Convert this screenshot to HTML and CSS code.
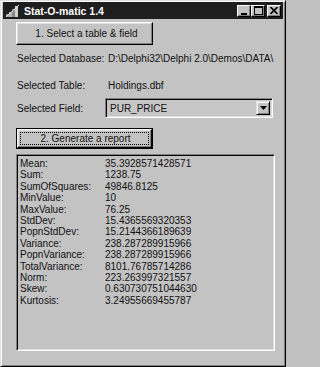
FILE: index.html
```html
<!DOCTYPE html>
<html>
<head>
<meta charset="utf-8">
<link rel="stylesheet" href="styles.css">
</head>
<body>
<div class="window">
  <div class="titlebar">
    <svg class="appicon" width="16" height="14" viewBox="0 0 16 14">
      <rect x="1" y="10" width="3" height="3" fill="#9a9a9a"/>
      <rect x="4" y="8" width="3" height="5" fill="#b8b8b8"/>
      <rect x="7" y="5" width="3" height="8" fill="#8a8a8a"/>
      <rect x="10" y="2" width="3" height="11" fill="#d0d0d0"/>
      <path d="M1 13 L14 1" stroke="#e8e8e8" stroke-width="1"/>
    </svg>
    <span class="title">Stat-O-matic 1.4</span>
    <div class="tbtns">
      <div class="tbtn"><svg width="8" height="8" viewBox="0 0 8 8"><rect x="1" y="6" width="6" height="2" fill="#000"/></svg></div>
      <div class="tbtn"><svg width="9" height="9" viewBox="0 0 9 9"><rect x="0.5" y="0.5" width="8" height="8" fill="none" stroke="#000"/><rect x="0" y="0" width="9" height="2" fill="#000"/></svg></div>
      <div class="tbtn close"><svg width="8" height="7" viewBox="0 0 8 7"><path d="M0.5 0 L7.5 7 M7.5 0 L0.5 7" stroke="#000" stroke-width="1.6"/></svg></div>
    </div>
  </div>
  <div class="content">
    <div class="btn btn1">1. Select a table &amp; field</div>
    <div class="row row-db"><span class="lbl">Selected Database:</span><span class="val">D:\Delphi32\Delphi 2.0\Demos\DATA\</span></div>
    <div class="row row-tbl"><span class="lbl">Selected Table:</span><span class="val">Holdings.dbf</span></div>
    <div class="row row-fld"><span class="lbl">Selected Field:</span>
      <div class="combo"><span class="ctext">PUR_PRICE</span><div class="cbtn"><svg width="7" height="4" viewBox="0 0 7 4"><path d="M0 0 H7 L3.5 4 Z" fill="#000"/></svg></div></div>
    </div>
    <div class="btn2-wrap"><div class="btn btn2"><span class="focus">2. Generate a report</span></div></div>
    <div class="memo">
      <span>Mean:</span><span>35.3928571428571</span>
      <span>Sum:</span><span>1238.75</span>
      <span>SumOfSquares:</span><span>49846.8125</span>
      <span>MinValue:</span><span>10</span>
      <span>MaxValue:</span><span>76.25</span>
      <span>StdDev:</span><span>15.4365569320353</span>
      <span>PopnStdDev:</span><span>15.2144366189639</span>
      <span>Variance:</span><span>238.287289915966</span>
      <span>PopnVariance:</span><span>238.287289915966</span>
      <span>TotalVariance:</span><span>8101.76785714286</span>
      <span>Norm:</span><span>223.263997321557</span>
      <span>Skew:</span><span>0.630730751044630</span>
      <span>Kurtosis:</span><span>3.24955669455787</span>
    </div>
  </div>
</div>
</body>
</html>
```

FILE: styles.css
```css
html, body {
  margin: 0;
  padding: 0;
  background: #c0c0c0;
}
.window {
  width: 286px;
  height: 367px;
  box-sizing: border-box;
  background: #c3c3c3;
  border: 1px solid;
  border-color: #dfdfdf #000 #000 #dfdfdf;
  box-shadow: inset 1px 1px #fff, inset -1px -1px #808080;
  padding: 1px 2px;
  font-family: "Liberation Sans", Arial, sans-serif;
  font-size: 10px;
  color: #111;
  overflow: hidden;
}
.titlebar {
  height: 17px;
  background: #1e1e1e;
  display: flex;
  align-items: center;
  padding-left: 2px;
}
.appicon {
  flex: none;
  margin-right: 3px;
}
.title {
  color: #fff;
  font-weight: bold;
  font-size: 10.5px;
  letter-spacing: 0;
}
.tbtns {
  margin-left: auto;
  display: flex;
  margin-right: 2px;
}
.tbtn {
  width: 14px;
  height: 12px;
  box-sizing: border-box;
  background: #c3c3c3;
  border: 1px solid;
  border-color: #fff #000 #000 #fff;
  box-shadow: inset -1px -1px #808080;
  display: flex;
  align-items: center;
  justify-content: center;
}
.tbtn.close {
  margin-left: 2px;
}
.content {
  padding-left: 13px;
  padding-right: 8px;
}
.btn {
  box-sizing: border-box;
  width: 137px;
  background: #c3c3c3;
  border: 1px solid;
  border-color: #fff #000 #000 #fff;
  box-shadow: inset -1px -1px #808080, inset 1px 1px #dfdfdf;
  display: flex;
  align-items: center;
  justify-content: center;
  color: #111;
}
.btn1 {
  margin-top: 3px;
  height: 23px;
  padding-left: 4px;
}
.row {
  display: grid;
  grid-template-columns: 91px auto;
  align-items: center;
  padding-left: 1px;
  white-space: nowrap;
}
.row-db {
  margin-top: 6px;
  height: 14px;
}
.row-tbl {
  margin-top: 13px;
  height: 14px;
}
.row-fld {
  margin-top: 6px;
  grid-template-columns: 88px 168px;
}
.combo {
  height: 20px;
  box-sizing: border-box;
  border: 1px solid;
  border-color: #808080 #fff #fff #808080;
  box-shadow: inset 1px 1px #000, inset -1px -1px #dfdfdf;
  background: #c6c6c6;
  display: flex;
  align-items: center;
  padding: 2px 2px 2px 4px;
}
.ctext {
  flex: 1;
}
.cbtn {
  width: 14px;
  height: 14px;
  box-sizing: border-box;
  background: #c3c3c3;
  border: 1px solid;
  border-color: #dfdfdf #000 #000 #dfdfdf;
  box-shadow: inset 1px 1px #fff, inset -1px -1px #808080;
  display: flex;
  align-items: center;
  justify-content: center;
}
.btn2-wrap {
  margin-top: 10px;
  width: 137px;
  height: 21px;
  box-sizing: border-box;
  border: 1px solid #000;
  display: flex;
}
.btn2 {
  width: 100%;
  height: 100%;
  padding: 3px;
}
.focus {
  flex: 1;
  align-self: stretch;
  display: flex;
  align-items: center;
  justify-content: center;
  outline: 1px dotted #000;
  outline-offset: 0;
  padding-left: 2px;
}
.memo {
  margin-top: 5px;
  width: 259px;
  height: 197px;
  box-sizing: border-box;
  border: 1px solid;
  border-color: #808080 #fff #fff #808080;
  box-shadow: inset 1px 1px #000, inset -1px -1px #dfdfdf;
  background: #c3c3c3;
  padding: 3px 2px 0 3px;
  display: grid;
  grid-template-columns: 85px auto;
  grid-auto-rows: 11.4px;
  line-height: 11.4px;
  align-content: start;
  white-space: nowrap;
}
```
